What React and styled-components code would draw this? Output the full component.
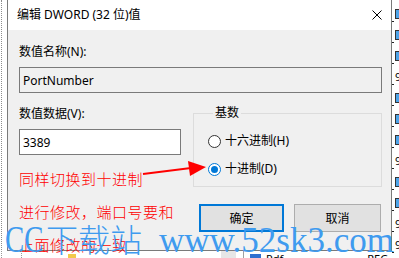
import React from 'react';
import styled, { createGlobalStyle } from 'styled-components';

const Global = createGlobalStyle`
  html, body { margin: 0; padding: 0; }
  body {
    width: 399px; height: 258px; overflow: hidden; background: #fff;
    font-family: "Noto Sans", "Noto Sans CJK SC", sans-serif;
  }
`;

const Screen = styled.div`
  position: relative;
  width: 399px;
  height: 258px;
  overflow: hidden;
  display: grid;
  grid-template-columns: 7px 385px 7px;
  grid-template-rows: 251px 7px;
  background: #fff;
`;

const TreeEdge = styled.div`
  grid-column: 1;
  grid-row: 1 / 3;
  margin-left: 1px;
  border-left: 1px dotted #8c8c8c;
`;

const Dialog = styled.div`
  grid-column: 2;
  grid-row: 1;
  box-sizing: border-box;
  border: 1px solid #7a7a7a;
  border-top: none;
  display: flex;
  flex-direction: column;
  background: #f0f0f0;
  font-size: 12px;
  color: #000;
`;

const TitleBar = styled.div`
  height: 30px;
  flex: none;
  background: #fff;
  display: flex;
  align-items: center;
  justify-content: space-between;
  padding: 0 9px;
  font-size: 12px;
  line-height: 16px;
`;

const Body = styled.div`
  flex: 1;
  padding: 14px 9px 0 11px;
  display: flex;
  flex-direction: column;
`;

const Label = styled.div`
  height: 16px;
  line-height: 16px;
  font-size: 12px;
`;

const TextBox = styled.div`
  box-sizing: border-box;
  height: 26px;
  margin-top: 7px;
  border: 1px solid #7a7a7a;
  background: ${p => (p.$readOnly ? '#f0f0f0' : '#fff')};
  padding-left: 3px;
  display: flex;
  align-items: center;
  font-size: 12px;
`;

const Row = styled.div`
  margin-top: 13px;
  display: grid;
  grid-template-columns: 162px 1fr;
  column-gap: 12px;
`;

const Column = styled.div`
  display: flex;
  flex-direction: column;
`;

const Notes = styled.div`
  margin-top: 7px;
  color: #ff0000;
  font-family: "Noto Sans CJK SC", sans-serif;
  font-weight: 300;
  font-size: 15px;
  letter-spacing: 0.5px;
  line-height: 33px;
  white-space: nowrap;
`;

const Group = styled.fieldset`
  margin: 0;
  padding: 0 0 9px 14px;
  border: 1px solid #dcdcdc;
  display: flex;
  flex-direction: column;
  gap: 12px;
`;

const Legend = styled.legend`
  font-size: 12px;
  line-height: 14px;
  padding: 0 2px;
  margin-left: 5px;
  margin-bottom: 13px;
`;

const RadioRow = styled.div`
  height: 16px;
  display: flex;
  align-items: center;
  gap: 4px;
  line-height: 16px;
`;

const RadioDot = styled.span`
  width: 13px;
  height: 13px;
  box-sizing: border-box;
  border-radius: 50%;
  border: 1px solid ${p => (p.$checked ? '#0078d7' : '#333')};
  background: #fff;
  display: flex;
  align-items: center;
  justify-content: center;
  flex: none;
  &::after {
    content: '';
    width: 7px;
    height: 7px;
    border-radius: 50%;
    background: ${p => (p.$checked ? '#0078d7' : 'transparent')};
  }
`;

const Buttons = styled.div`
  margin-top: 17px;
  display: flex;
  justify-content: flex-end;
  gap: 10px;
  padding-right: 1px;
`;

const Button = styled.div`
  box-sizing: border-box;
  width: ${p => p.$w}px;
  height: 28px;
  background: #e1e1e1;
  border: ${p => (p.$default ? '2px solid #0078d7' : '1px solid #adadad')};
  display: flex;
  align-items: center;
  justify-content: center;
  font-size: 12px;
`;

const RightStrip = styled.div`
  grid-column: 3;
  grid-row: 1 / 3;
  padding-top: 3px;
  display: flex;
  flex-direction: column;
  overflow: hidden;
`;

const StripRow = styled.div`
  height: 21px;
  flex: none;
  display: flex;
  align-items: center;
  gap: 1px;
  font-family: "Noto Sans", sans-serif;
  font-size: 11px;
  color: #000;
`;

const Tick = styled.span`
  width: 2px;
  height: 1px;
  background: #222;
  align-self: flex-end;
  margin-bottom: 2px;
  flex: none;
`;

const RegIcon = styled.span`
  width: 10px;
  height: 10px;
  box-sizing: border-box;
  border: 1px solid #333;
  background: #4da3e8;
  flex: none;
`;

const BottomStrip = styled.div`
  grid-column: 1 / 3;
  grid-row: 2;
  display: flex;
  align-items: flex-start;
  overflow: hidden;
  font-family: "Noto Sans", sans-serif;
  font-size: 11px;
`;

const Dots = styled.span`
  width: 1px;
  height: 7px;
  border-left: 1px dotted #999;
  margin-left: ${p => p.$ml}px;
  flex: none;
`;

const Folder = styled.span`
  width: 8px;
  height: 4px;
  margin-left: ${p => p.$ml}px;
  margin-top: 3px;
  background: #f2c94c;
  flex: none;
`;

const GrayCell = styled.span`
  width: 15px;
  height: 7px;
  margin-left: ${p => p.$ml}px;
  background: #e6e6e6;
  flex: none;
`;

const VLine = styled.span`
  width: 1px;
  height: 7px;
  margin-left: ${p => p.$ml}px;
  background: #a0a0a0;
  flex: none;
`;

const MiniIcon = styled.span`
  width: 11px;
  height: 4px;
  margin-left: ${p => p.$ml}px;
  margin-top: 3px;
  background: #2f6fd0;
  flex: none;
`;

const StripText = styled.span`
  margin-left: ${p => p.$ml}px;
  margin-top: 1px;
  line-height: 14px;
  white-space: nowrap;
  flex: none;
`;

const Overlay = styled.svg`
  position: absolute;
  left: 0;
  top: 0;
  pointer-events: none;
`;

const Watermark = styled.div`
  position: absolute;
  left: 5px;
  top: 221px;
  display: flex;
  align-items: baseline;
  color: #3f9bef;
  line-height: 1;
  white-space: nowrap;
  pointer-events: none;
`;

const WmLatin = styled.span`
  font-family: "Liberation Serif", serif;
  font-size: 35px;
  margin-left: ${p => p.$ml || 0}px;
`;

const WmCC = styled(WmLatin)`
  display: inline-block;
  width: 38px;
  font-size: 37px;
  transform: scaleX(0.78);
  transform-origin: left;
`;

const WmCJK = styled.span`
  font-family: "Noto Sans CJK SC", sans-serif;
  font-weight: 300;
  font-size: 32px;
  margin-left: 3px;
`;

const stripItems = ['i', 'i', 'i', '9', 'i', 'i', 'i', '9', 'i', 'i', '9', '9'];

export default function App() {
  return (
    <>
      <Global />
      <Screen>
        <TreeEdge />
        <Dialog>
          <TitleBar>
            <span>编辑 DWORD (32 位)值</span>
            <svg width="10" height="10" viewBox="0 0 10 10">
              <path d="M0.5 0.5 L9.5 9.5 M9.5 0.5 L0.5 9.5" stroke="#000" strokeWidth="1" fill="none" />
            </svg>
          </TitleBar>
          <Body>
            <Label>数值名称(N):</Label>
            <TextBox $readOnly>PortNumber</TextBox>
            <Row>
              <Column>
                <Label>数值数据(V):</Label>
                <TextBox>3389</TextBox>
                <Notes>
                  <div>同样切换到十进制</div>
                  <div>进行修改，端口号要和</div>
                  <div>上面修改的一致</div>
                </Notes>
              </Column>
              <Column>
                <Group>
                  <Legend>基数</Legend>
                  <RadioRow>
                    <RadioDot />
                    <span>十六进制(H)</span>
                  </RadioRow>
                  <RadioRow>
                    <RadioDot $checked />
                    <span>十进制(D)</span>
                  </RadioRow>
                </Group>
                <Buttons>
                  <Button $w={85} $default>确定</Button>
                  <Button $w={87}>取消</Button>
                </Buttons>
              </Column>
            </Row>
          </Body>
        </Dialog>
        <RightStrip>
          {stripItems.map((t, i) => (
            <StripRow key={i}>
              <Tick />
              {t === 'i' ? <RegIcon /> : <span>9</span>}
            </StripRow>
          ))}
        </RightStrip>
        <BottomStrip>
          <Dots $ml={1} />
          <Dots $ml={18} />
          <Folder $ml={45} />
          <GrayCell $ml={145} />
          <VLine $ml={7} />
          <MiniIcon $ml={6} />
          <StripText $ml={5}>Pdf</StripText>
          <StripText $ml={84}>REG_</StripText>
        </BottomStrip>

        <Overlay width="399" height="258" viewBox="0 0 399 258">
          <line x1="143" y1="174" x2="191" y2="168" stroke="#ff0000" strokeWidth="2" />
          <polygon points="188,161 206,167 190,176" fill="#ff0000" />
        </Overlay>
        <Watermark>
          <WmCC>CC</WmCC>
          <WmCJK>下载站</WmCJK>
          <WmLatin $ml={17}>www.52sk3.com</WmLatin>
        </Watermark>
      </Screen>
    </>
  );
}
